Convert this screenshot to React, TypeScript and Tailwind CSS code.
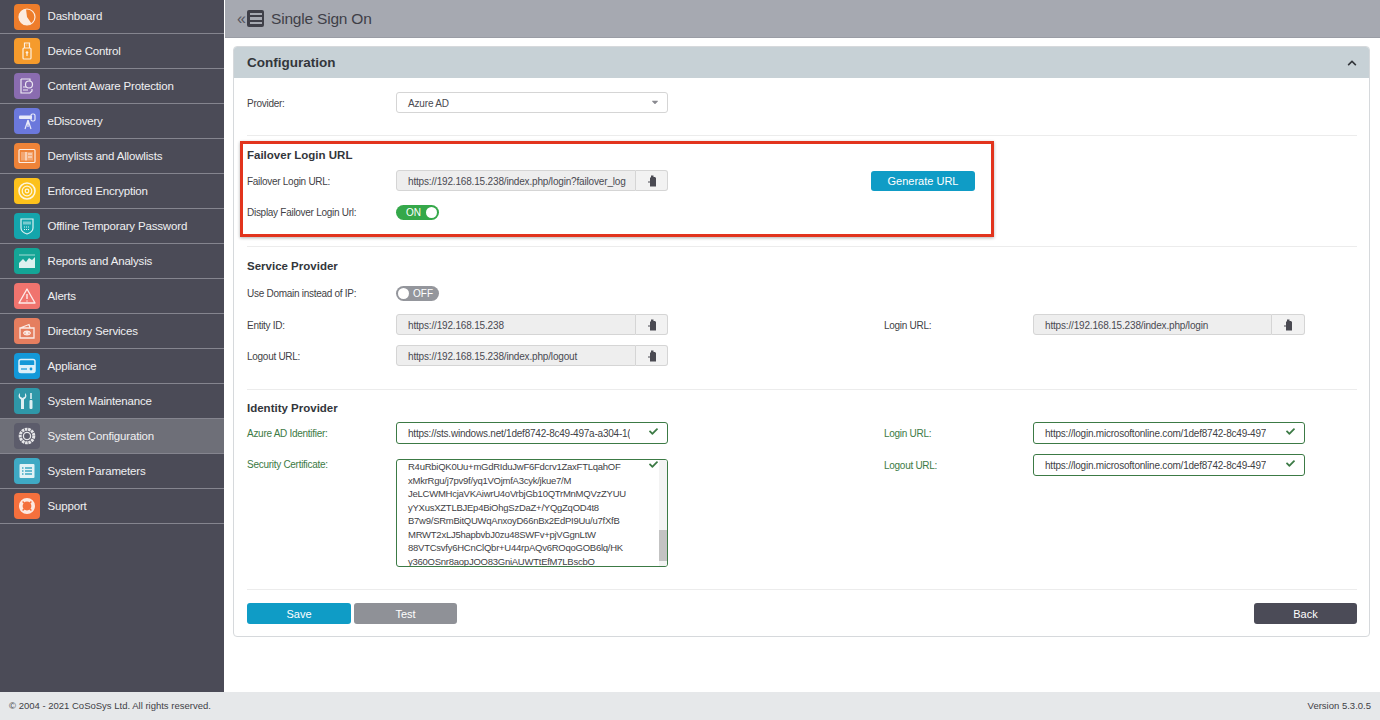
import React from "react";
import { FaChevronUp, FaCheck, FaCaretDown } from "react-icons/fa";

const tile = "w-[26px] h-[26px] rounded-[4px] flex items-center justify-center shrink-0";

const S = ({ children }: { children: React.ReactNode }) => (
  <svg viewBox="0 0 20 20" width="20" height="20" fill="none" stroke="#fff" strokeWidth="1.2" opacity="0.85">{children}</svg>
);

const menu: { label: string; color: string; icon: React.ReactNode; active?: boolean }[] = [
  { label: "Dashboard", color: "bg-[#ee7d2b]", icon: <S><circle cx="10" cy="10" r="8" /><path d="M10 10 L9 2 A8 8 0 0 0 2.500 13 A8 8 0 0 0 14.500 16.500 Z" fill="#fff" stroke="none" /></S> },
  { label: "Device Control", color: "bg-[#f59b2c]", icon: <S><rect x="6" y="7" width="8" height="11" rx="1" /><path d="M7.500 7V2h5v5M9 4h.5M10.800 4h.5M10 10v5M8.800 12l1.200-1 1.200 1" /></S> },
  { label: "Content Aware Protection", color: "bg-[#8a6cb0]", icon: <S><path d="M4 3h9v2M4 3v14h9l2-2v-2M6 11h3M6 14h5" /><circle cx="12" cy="8.500" r="3.500" /></S> },
  { label: "eDiscovery", color: "bg-[#6b78dc]", icon: <S><rect x="2" y="4.500" width="13" height="3.500" rx="1" fill="#fff" stroke="none" /><rect x="14" y="3" width="4" height="7" rx="1.500" /><path d="M11 9l-3 9M11 9l3 9M11 9v7" /></S> },
  { label: "Denylists and Allowlists", color: "bg-[#ee8338]", icon: <S><rect x="2" y="3.500" width="16" height="13" rx="1" /><rect x="4" y="6" width="12" height="8.500" fill="#fff" fillOpacity="0.35" stroke="none" /><path d="M9 6v8.500M11 8h4M11 11h4" /></S> },
  { label: "Enforced Encryption", color: "bg-[#fcc11b]", icon: <S><circle cx="10" cy="10" r="8" strokeWidth="1.600" /><circle cx="10" cy="10" r="4.800" strokeWidth="1.200" /><circle cx="10" cy="10" r="1.800" strokeWidth="1.200" /></S> },
  { label: "Offline Temporary Password", color: "bg-[#14a5ac]", icon: <S><path d="M4 3h12v9c0 3-3 5-6 6-3-1-6-3-6-6z" /><path d="M6 5.500h8v3H6z" fill="#fff" fillOpacity="0.5" stroke="none" /><path d="M7 11h6M7 13.500h6" strokeDasharray="1 1" /></S> },
  { label: "Reports and Analysis", color: "bg-[#14a596]", icon: <S><path d="M2 4h16" strokeOpacity="0.6" /><path d="M2 17v-5l4-4 3 3 3-4 3 2 3-3v11z" fill="#fff" stroke="none" /></S> },
  { label: "Alerts", color: "bg-[#f0746e]", icon: <S><path d="M10 3L18 17H2z" strokeWidth="1.400" strokeLinejoin="round" /><path d="M10 8v5M10 14.500v1" strokeWidth="1.400" /></S> },
  { label: "Directory Services", color: "bg-[#e57e5f]", icon: <S><path d="M3 7l9-3.500 1 3.500M3 7h14v10H3z" strokeWidth="1.300" /><circle cx="10" cy="12" r="1.800" fill="#fff" stroke="none" /><path d="M6.500 12c1-2.500 6-2.500 7 0M6.500 12c1 2.500 6 2.500 7 0" /></S> },
  { label: "Appliance", color: "bg-[#1398d8]", icon: <S><rect x="2" y="3.500" width="16" height="13" rx="2" strokeWidth="1.500" /><path d="M2 9h16v7.500H2z" fill="#fff" stroke="none" /><circle cx="14" cy="13" r="1.400" fill="#1398d8" stroke="none" /><path d="M4 13h6" stroke="#1398d8" /></S> },
  { label: "System Maintenance", color: "bg-[#2f97a8]", icon: <S><path d="M3 2v3.500l2.500 1.500L8 5.500V2c2 1.500 2 5-1 6.500V18H4V8.500C1 7 1 3.500 3 2z" fill="#fff" stroke="none" /><path d="M14 2v6" strokeWidth="1.600" /><rect x="12.500" y="9" width="3" height="9" rx="1" fill="#fff" stroke="none" /></S> },
  { label: "System Configuration", color: "bg-[#5c5c6b]", active: true, icon: <S><circle cx="10" cy="10" r="6.800" strokeWidth="3" strokeDasharray="2.600 0.700" /><circle cx="10" cy="10" r="3.600" strokeWidth="1.300" /></S> },
  { label: "System Parameters", color: "bg-[#3fa9c4]", icon: <S><rect x="2.500" y="3" width="15" height="14" rx="1" fill="#fff" stroke="none" /><path d="M5 7h1.500M8 7h7M5 10h1.500M8 10h7M5 13h1.500M8 13h7" stroke="#3fa9c4" strokeWidth="1.400" /></S> },
  { label: "Support", color: "bg-[#f4703d]", icon: <S><circle cx="10" cy="10" r="6.200" strokeWidth="3.600" /><path d="M5.600 5.600l2 2M14.400 5.600l-2 2M5.600 14.400l2-2M14.400 14.400l-2-2" stroke="#f4703d" strokeWidth="1.400" /></S> },
];

const Label = ({ children, green, low }: { children: React.ReactNode; green?: boolean; low?: boolean }) => (
  <div className={`w-[149px] shrink-0 text-[10px] tracking-[-0.28px] leading-none ${low ? "pt-[2px]" : ""} ${green ? "text-[#3c7a45]" : "text-[#3f3f46]"}`}>{children}</div>
);

const CopyIcon = () => (
  <svg viewBox="0 0 10 12" width="10" height="12" fill="currentColor">
    <path d="M4 0.500h2.500v1.500h1.500l1 1v8.500H3V7.500H1V6.500h2V3l1-1z" />
  </svg>
);

const CopyInput = ({ value, w = "w-[240px]", btn = "w-[32px]" }: { value: string; w?: string; btn?: string }) => (
  <div className="flex h-[21px]">
    <div className={`${w} bg-[#eeeeee] border border-[#d5d5d5] rounded-l-[3px] pl-[11px] pr-[8px] text-[10px] tracking-[-0.17px] leading-[21px] text-[#4a4a52] overflow-hidden whitespace-nowrap`}>{value}</div>
    <div className={`${btn} bg-[#f2f2f2] border border-l-0 border-[#d5d5d5] rounded-r-[3px] flex items-center justify-center text-[#4a4a52]`}><CopyIcon /></div>
  </div>
);

const GreenInput = ({ value }: { value: string }) => (
  <div className="relative w-[272px] h-[22px] bg-white border border-[#3c7a45] rounded-[3px] pl-[11px] pr-[36px] text-[10px] tracking-[-0.22px] leading-[22px] text-[#3f3f46] flex">
    <span className="overflow-hidden whitespace-nowrap">{value}</span>
    <FaCheck size={9} className="absolute right-[9px] top-[4px] text-[#3c7a45]" />
  </div>
);

const Toggle = ({ on }: { on: boolean }) =>
  on ? (
    <div className="w-[43px] h-[15px] rounded-full bg-[#35a84a] flex items-center justify-between pl-[10px] pr-[2px] text-[10px] leading-none text-white">
      <span>ON</span>
      <span className="w-[11px] h-[11px] rounded-full bg-white" />
    </div>
  ) : (
    <div className="w-[43px] h-[15px] rounded-full bg-[#94969c] flex items-center justify-between pl-[2px] pr-[6px] text-[10px] leading-none text-white">
      <span className="w-[11px] h-[11px] rounded-full bg-white" />
      <span>OFF</span>
    </div>
  );

const Hr = () => <div className="h-px bg-[#ececec]" />;
const Heading = ({ children }: { children: React.ReactNode }) => (
  <div className="text-[11.500px] leading-[15px] font-bold text-[#33363b]">{children}</div>
);

const cert = [
  "R4uRbiQK0Uu+mGdRIduJwF6Fdcrv1ZaxFTLqahOF",
  "xMkrRgu/j7pv9f/yq1VOjmfA3cyk/jkue7/M",
  "JeLCWMHcjaVKAiwrU4oVrbjGb10QTrMnMQVzZYUU",
  "yYXusXZTLBJEp4BiOhgSzDaZ+/YQgZqOD4t8",
  "B7w9/SRmBitQUWqAnxoyD66nBx2EdPI9Uu/u7fXfB",
  "MRWT2xLJ5hapbvbJ0zu48SWFv+pjVGgnLtW",
  "88VTCsvfy6HCnClQbr+U44rpAQv6ROqoGOB6lq/HK",
  "y360OSnr8aopJOO83GniAUWTtEfM7LBscbO",
];

const btn = "h-[21px] pt-[1px] rounded-[3px] text-white text-[11px] leading-none";

export default function App() {
  return (
    <div className="w-[1380px] h-[720px] flex flex-col overflow-hidden font-['Liberation_Sans',sans-serif] bg-[#f4f5f6]">
      <div className="flex flex-1 min-h-0">
        <aside className="w-[224px] shrink-0 bg-[#4b4b57]">
          {menu.map((m, i) => (
            <div
              key={m.label}
              className={`flex items-center pl-[13.500px] gap-[8px] border-b border-[#85858f] ${i === 0 ? "h-[34px]" : "h-[35px]"} ${m.active ? "bg-[#6e6f78]" : ""}`}
            >
              <div className={`${tile} ${m.color}`}>{m.icon}</div>
              <span className={`text-[11.500px] tracking-[-0.17px] leading-none text-[#f0f0f2] whitespace-nowrap ${i === 0 ? "pt-[1px]" : "pt-[2px]"}`}>{m.label}</span>
            </div>
          ))}
        </aside>
        <main className="flex-1 min-w-0 flex flex-col bg-white">
          <div className="h-[38px] ml-[1px] bg-[#a6a9b1] border-b border-[#9a9da5] flex items-center pl-[12px] shrink-0">
            <span className="text-[16px] w-[10px] text-[#56565e] leading-none">«</span>
            <div className="w-[17px] h-[17px] rounded-[2px] bg-[#3f3f48] flex flex-col justify-center gap-[2px] px-[2.500px]">
              <span className="h-[2.500px] bg-[#a6a9b1]" />
              <span className="h-[2.500px] bg-[#a6a9b1]" />
              <span className="h-[2.500px] bg-[#a6a9b1]" />
            </div>
            <span className="ml-[7px] text-[15.500px] tracking-[-0.2px] text-[#3f3f48] leading-none">Single Sign On</span>
          </div>
          <div className="relative mt-[8px] ml-[9px] mr-[10px] h-[591px] border border-[#d6d9dc] rounded-[4px] shrink-0">
            <div className="h-[31px] bg-[#c7d1d6] rounded-t-[3px] flex items-center justify-between pl-[13px] pr-[12px]">
              <span className="text-[13.500px] font-bold text-[#33363b] leading-none">Configuration</span>
              <FaChevronUp size={10} className="text-[#33363b]" />
            </div>
            <div className="pl-[13px] pr-[12px]">
              <div className="flex items-center h-[21px] mt-[14px]">
                <Label low>Provider:</Label>
                <div className="relative w-[272px] h-[21px] border border-[#d5d5d5] rounded-[3px] bg-white pl-[11px] text-[10px] tracking-[-0.17px] leading-[21px] text-[#4a4a52]">
                  Azure AD
                  <FaCaretDown size={10} className="absolute right-[7px] top-[4px] text-[#8a8a90]" />
                </div>
              </div>
              <div className="mt-[22px]"><Hr /></div>

              <div className="mt-[12px]"><Heading>Failover Login URL</Heading></div>
              <div className="flex items-center h-[21px] mt-[7px]">
                <Label low>Failover Login URL:</Label>
                <CopyInput value="https://192.168.15.238/index.php/login?failover_log" />
                <button className={`ml-[203px] w-[104px] !h-[20px] bg-[#0f9cc6] ${btn}`}>Generate URL</button>
              </div>
              <div className="flex items-center h-[15px] mt-[14px]">
                <Label>Display Failover Login Url:</Label>
                <Toggle on />
              </div>
              <div className="mt-[26px]"><Hr /></div>

              <div className="mt-[12px]"><Heading>Service Provider</Heading></div>
              <div className="flex items-center h-[15px] mt-[12px]">
                <Label>Use Domain instead of IP:</Label>
                <Toggle on={false} />
              </div>
              <div className="flex items-center h-[21px] mt-[13px]">
                <Label low>Entity ID:</Label>
                <CopyInput value="https://192.168.15.238" />
                <div className="w-[216px]" />
                <Label low>Login URL:</Label>
                <CopyInput value="https://192.168.15.238/index.php/login" w="w-[239px]" btn="w-[33px]" />
              </div>
              <div className="flex items-center h-[21px] mt-[10px]">
                <Label low>Logout URL:</Label>
                <CopyInput value="https://192.168.15.238/index.php/logout" />
              </div>
              <div className="mt-[23px]"><Hr /></div>

              <div className="mt-[11px]"><Heading>Identity Provider</Heading></div>
              <div className="flex items-center h-[22px] mt-[6px]">
                <Label green low>Azure AD Identifier:</Label>
                <GreenInput value="https://sts.windows.net/1def8742-8c49-497a-a304-1(" />
                <div className="w-[216px]" />
                <Label green low>Login URL:</Label>
                <GreenInput value="https://login.microsoftonline.com/1def8742-8c49-497" />
              </div>
              <div className="flex items-start mt-[10px]">
                <div className="pt-[6px]"><Label green>Security Certificate:</Label></div>
                <div className="relative mt-[5px] w-[272px] h-[108px] border border-[#3c7a45] rounded-[3px] overflow-hidden pl-[11px] text-[9.500px] tracking-[-0.25px] leading-[13.500px] text-[#3f3f46] whitespace-nowrap">
                  {cert.map((l) => <div key={l}>{l}</div>)}
                  <FaCheck size={9} className="absolute right-[9px] top-0 text-[#3c7a45]" />
                  <div className="absolute right-0 top-0 bottom-0 w-[8px] bg-[#f3f3f3]" />
                  <div className="absolute right-0 top-[70px] h-[31px] w-[8px] bg-[#c3c3c3]" />
                </div>
                <div className="w-[216px]" />
                <div className="h-[22px] flex items-center"><Label green low>Logout URL:</Label></div>
                <GreenInput value="https://login.microsoftonline.com/1def8742-8c49-497" />
              </div>
              <div className="mt-[22px]"><Hr /></div>

              <div className="flex items-center mt-[13px]">
                <button className={`w-[104px] bg-[#0f9cc6] ${btn}`}>Save</button>
                <button className={`ml-[3px] w-[103px] bg-[#8f9197] ${btn}`}>Test</button>
                <button className={`ml-auto w-[103px] bg-[#4b4b57] ${btn}`}>Back</button>
              </div>
            </div>
            <div className="absolute left-[6px] top-[93.500px] w-[754px] h-[96px] border-[3px] border-[#e2341d] shadow-[0_1px_3px_rgba(0,0,0,0.3)] pointer-events-none" />
          </div>
        </main>
      </div>
      <footer className="h-[28px] shrink-0 bg-[#e6e8ea] flex items-center justify-between pl-[9px] pr-[9px] text-[9.500px] leading-none text-[#3f3f46]">
        <span>© 2004 - 2021 CoSoSys Ltd. All rights reserved.</span>
        <span>Version 5.3.0.5</span>
      </footer>
    </div>
  );
}
